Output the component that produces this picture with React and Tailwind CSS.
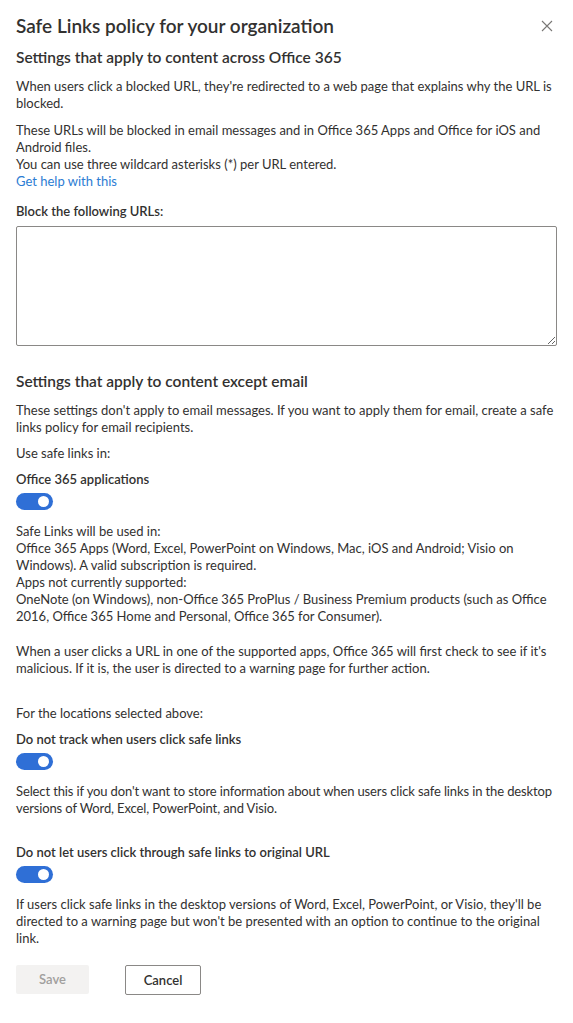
import React from 'react';

const Toggle = () => (
  <div className="mt-[5px] flex h-[17px] w-[37px] items-center justify-end rounded-full bg-[#2f6fd6] pr-[4px]">
    <div className="h-[11px] w-[11px] rounded-full bg-white" />
  </div>
);

export default function App() {
  return (
    <div
      className="min-h-[1023px] w-[573px] bg-white px-4 text-[13px] leading-[17px] text-[#323130]"
      style={{ fontFamily: 'Lato, "Open Sans", sans-serif' }}
    >
      <div className="flex items-center justify-between pt-[12px]">
        <h1 className="text-[19px] font-semibold leading-[28px] text-[#323130]">
          Safe Links policy for your organization
        </h1>
        <svg width="12" height="12" viewBox="0 0 12 12" className="mr-[4px]">
          <path d="M1 1L11 11M11 1L1 11" stroke="#797775" strokeWidth="1.1" />
        </svg>
      </div>

      <h2 className="mt-[6px] text-[15.5px] font-semibold leading-[22px]">
        Settings that apply to content across Office 365
      </h2>

      <p className="mt-[10px]">
        When users click a blocked URL, they're redirected to a web page that explains why the URL is blocked.
      </p>
      <p className="mt-[10px]">
        These URLs will be blocked in email messages and in Office 365 Apps and Office for iOS and Android files.
        <br />
        You can use three wildcard asterisks (*) per URL entered.
        <br />
        <a className="text-[#2b7cd3]">Get help with this</a>
      </p>

      <div className="mt-[13px] font-semibold">Block the following URLs:</div>
      <textarea className="mt-[6px] block h-[120px] w-full rounded-[2px] border border-[#8a8886] outline-none" />

      <h2 className="mt-[24px] text-[15.5px] font-semibold leading-[22px]">
        Settings that apply to content except email
      </h2>
      <p className="mt-[10px]">
        These settings don't apply to email messages. If you want to apply them for email, create a safe links policy
        for email recipients.
      </p>
      <p className="mt-[9px]">Use safe links in:</p>

      <div className="mt-[9px] font-semibold">Office 365 applications</div>
      <Toggle />

      <p className="mt-[13px]">
        Safe Links will be used in:
        <br />
        Office 365 Apps (Word, Excel, PowerPoint on Windows, Mac, iOS and Android; Visio on Windows). A valid
        subscription is required.
        <br />
        Apps not currently supported:
        <br />
        OneNote (on Windows), non-Office 365 ProPlus / Business Premium products (such as Office 2016, Office 365 Home
        and Personal, Office 365 for Consumer).
      </p>
      <p className="mt-[18px]">
        When a user clicks a URL in one of the supported apps, Office 365 will first check to see if it's malicious. If
        it is, the user is directed to a warning page for further action.
      </p>

      <p className="mt-[28px]">For the locations selected above:</p>
      <div className="mt-[9px] font-semibold">Do not track when users click safe links</div>
      <Toggle />
      <p className="mt-[13px] tracking-[-0.12px]">
        Select this if you don't want to store information about when users click safe links in the desktop versions
        of Word, Excel, PowerPoint, and Visio.
      </p>

      <div className="mt-[27px] font-semibold">Do not let users click through safe links to original URL</div>
      <Toggle />
      <p className="mt-[13px]">
        If users click safe links in the desktop versions of Word, Excel, PowerPoint, or Visio, they'll be directed to
        a warning page but won't be presented with an option to continue to the original link.
      </p>

      <div className="mt-[18px] flex gap-[36px]">
        <button className="h-[29px] w-[73px] rounded-[2px] bg-[#f3f2f1] font-semibold text-[#a19f9d]">Save</button>
        <button className="h-[30px] w-[76px] rounded-[2px] border border-[#8a8886] bg-white font-semibold text-[#323130]">
          Cancel
        </button>
      </div>
    </div>
  );
}
